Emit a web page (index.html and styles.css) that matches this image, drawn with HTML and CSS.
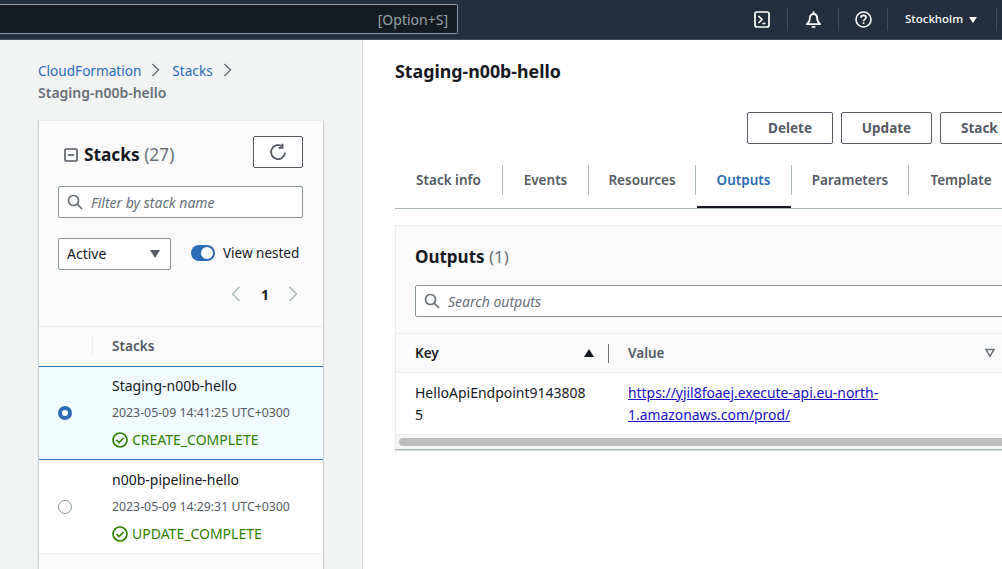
FILE: index.html
```html
<!DOCTYPE html>
<html lang="en">
<head>
<meta charset="utf-8">
<title>Staging-n00b-hello</title>
<link rel="stylesheet" href="styles.css">
</head>
<body>
<header class="topbar">
  <div class="topsearch"><span class="shortcut">[Option+S]</span></div>
  <div class="topicons">
    <div class="topicon ti-shell">
      <svg width="16" height="17" viewBox="0 0 16 17" fill="none" stroke="#fff" stroke-width="1.7"><rect x="1" y="1" width="14" height="15" rx="2"/><path d="M4.5 5l3.5 3.5-3.5 3.500M8.500 12.500h3"/></svg>
    </div>
    <div class="topicon ti-bell">
      <svg width="17" height="18" viewBox="0 0 17 18" fill="none" stroke="#fff" stroke-width="1.8" stroke-linejoin="round"><path d="M8.500 3C5.900 3 4.800 5 4.800 7.500c0 2.500-1 4.200-3 5.700h13.400c-2-1.500-3-3.200-3-5.700C12.200 5 11.100 3 8.500 3z"/><path d="M8.500 .5V3M6.700 15.800h3.600"/></svg>
    </div>
    <div class="topicon ti-help">
      <svg width="17" height="17" viewBox="0 0 17 17" fill="none" stroke="#fff" stroke-width="1.6"><circle cx="8.500" cy="8.500" r="7.500"/><path d="M6 6.700c0-1.400 1.100-2.300 2.500-2.300s2.500.9 2.500 2.100c0 1.800-2.500 1.900-2.500 3.800"/><path d="M8.500 11.300v1.700"/></svg>
    </div>
    <div class="region"><span class="region-name">Stockholm</span><i class="caret-white"></i></div>
  </div>
</header>

<div class="page">
  <aside class="left">
    <nav class="crumbs">
      <div class="crumbline">
        <a class="crumb">CloudFormation</a>
        <svg class="chev" width="10" height="14" viewBox="0 0 10 14" fill="none" stroke="#687078" stroke-width="1.500"><path d="M1.500 1l6 6-6 6"/></svg>
        <a class="crumb">Stacks</a>
        <svg class="chev" width="10" height="14" viewBox="0 0 10 14" fill="none" stroke="#687078" stroke-width="1.500"><path d="M1.500 1l6 6-6 6"/></svg>
      </div>
      <div class="crumb-current">Staging-n00b-hello</div>
    </nav>

    <section class="stacks">
      <div class="stacks-head">
        <div class="stacks-title">
          <svg width="14" height="14" viewBox="0 0 14 14" fill="none" stroke="#545b64" stroke-width="1.600"><rect x="1" y="1" width="12" height="12" rx="1"/><path d="M4 7h6"/></svg>
          <h2>Stacks <span class="count">(27)</span></h2>
        </div>
        <button class="refresh" type="button">
          <svg width="18" height="18" viewBox="0 0 18 18" fill="none" stroke="#545b64" stroke-width="1.800"><path d="M16 9.500A7 7 0 1 1 12.800 3.200"/><path d="M13.500 .8v4h-4"/></svg>
        </button>
      </div>
      <div class="field filter">
        <svg width="16" height="16" viewBox="0 0 16 16" fill="none" stroke="#687078" stroke-width="1.700"><circle cx="6.500" cy="6.500" r="5"/><path d="M10.200 10.200l4.800 4.800"/></svg>
        <span class="placeholder">Filter by stack name</span>
      </div>
      <div class="controls">
        <div class="select"><span>Active</span><i class="caret-grey"></i></div>
        <div class="toggle"><i class="switch"><b></b></i><span>View nested</span></div>
      </div>
      <div class="pager">
        <svg width="10" height="16" viewBox="0 0 10 16" fill="none" stroke="#aab7b8" stroke-width="1.500"><path d="M8.500 1l-7 7 7 7"/></svg>
        <span>1</span>
        <svg width="10" height="16" viewBox="0 0 10 16" fill="none" stroke="#aab7b8" stroke-width="1.500"><path d="M1.500 1l7 7-7 7"/></svg>
      </div>
      <div class="list-head"><span class="head-sep"></span><span>Stacks</span></div>

      <div class="row selected">
        <i class="radio on"></i>
        <div class="row-body">
          <div class="name">Staging-n00b-hello</div>
          <div class="date">2023-05-09 14:41:25 UTC+0300</div>
          <div class="status">
            <svg width="16" height="16" viewBox="0 0 16 16" fill="none" stroke="#2f8000" stroke-width="1.700"><circle cx="8" cy="8" r="7"/><path d="M4.500 8l2.500 2.500 4.500-4.500"/></svg>
            <span>CREATE_COMPLETE</span>
          </div>
        </div>
      </div>
      <div class="row plain">
        <i class="radio"></i>
        <div class="row-body">
          <div class="name">n00b-pipeline-hello</div>
          <div class="date">2023-05-09 14:29:31 UTC+0300</div>
          <div class="status">
            <svg width="16" height="16" viewBox="0 0 16 16" fill="none" stroke="#2f8000" stroke-width="1.700"><circle cx="8" cy="8" r="7"/><path d="M4.500 8l2.500 2.500 4.500-4.500"/></svg>
            <span>UPDATE_COMPLETE</span>
          </div>
        </div>
      </div>
    </section>
  </aside>

  <main class="right">
    <h1>Staging-n00b-hello</h1>
    <div class="actions">
      <button class="btn b-delete" type="button">Delete</button>
      <button class="btn b-update" type="button">Update</button>
      <button class="btn b-stack" type="button">Stack</button>
    </div>
    <div class="tabs">
      <a class="tab t1">Stack info</a>
      <a class="tab t2">Events</a>
      <a class="tab t3">Resources</a>
      <a class="tab t4 active">Outputs</a>
      <a class="tab t5">Parameters</a>
      <a class="tab t6">Template</a>
    </div>
    <section class="outputs">
      <h2 class="outputs-title">Outputs <span class="count">(1)</span></h2>
      <div class="field search">
        <svg width="16" height="16" viewBox="0 0 16 16" fill="none" stroke="#687078" stroke-width="1.700"><circle cx="6.500" cy="6.500" r="5"/><path d="M10.200 10.200l4.800 4.800"/></svg>
        <span class="placeholder">Search outputs</span>
      </div>
      <div class="thead">
        <div class="th th-key"><span>Key</span><i class="sort-up"></i></div>
        <div class="th th-value">
          <span>Value</span>
          <svg width="12" height="10" viewBox="0 0 12 10" fill="none" stroke="#687078" stroke-width="1.500"><path d="M2 1.500h8L6 8.300z"/></svg>
        </div>
      </div>
      <div class="tbody">
        <div class="td-key">HelloApiEndpoint9143808<br>5</div>
        <div class="td-value"><a class="url">https://yjil8foaej.execute-api.eu-north-<br>1.amazonaws.com/prod/</a></div>
      </div>
      <div class="scrolltrack"><div class="scrollbar"></div></div>
    </section>
  </main>
</div>
</body>
</html>
```
FILE: styles.css
```css
* { box-sizing: border-box; }
html, body { margin: 0; height: 100%; overflow: hidden; }
body {
  width: 1002px;
  height: 569px;
  background: #fff;
  color: #16191f;
  font-family: "Noto Sans", "Open Sans", sans-serif;
  font-size: 14px;
}
h1, h2 { margin: 0; }

.topbar {
  height: 40px;
  display: flex;
  background: #232f3e;
  border-bottom: 1px solid #414d5c;
  overflow: hidden;
}
.topsearch {
  width: 458px;
  height: 30px;
  margin-top: 4px;
  display: flex;
  justify-content: flex-end;
  align-items: center;
  padding-right: 9px;
  background: #161b22;
  border: 1px solid #8d99a8;
  border-left: 0;
  border-radius: 0 2px 2px 0;
}
.shortcut { color: #95a5a6; font-size: 14px; }
.topicons { display: flex; align-items: center; height: 39px; padding-left: 296px; flex: 1; }
.topicon {
  height: 23px;
  display: flex;
  align-items: center;
  border-right: 1px solid #414d5c;
}
.ti-shell { width: 34px; }
.ti-bell { width: 51px; padding-left: 17px; }
.ti-help { width: 49px; padding-left: 16px; }
.region {
  display: flex;
  align-items: center;
  gap: 6px;
  width: 109px;
  height: 23px;
  padding-left: 17px;
  border-right: 1px solid #414d5c;
  color: #fff;
  font-size: 11.5px;
  font-weight: 500;
}
.region-name { margin-top: -2px; }
.caret-white {
  width: 0; height: 0;
  border-left: 4.5px solid transparent;
  border-right: 4.5px solid transparent;
  border-top: 6px solid #fff;
}

.page { display: flex; height: 529px; }
.left {
  width: 363px;
  flex: none;
  background: #f2f3f3;
  border-right: 1px solid #d5dbdb;
  padding: 20px 38px 0;
  overflow: hidden;
}
.crumbs { height: 60px; }
.crumbline { display: flex; align-items: center; height: 20px; }
.crumb { color: #2b6cb5; font-size: 13.6px; }
.chev { margin: 0 11px 0 10px; }
.crumb-current { margin-top: 2px; color: #687078; font-size: 14px; font-weight: 600; line-height: 22px; }

.stacks {
  width: 286px;
  height: 470px;
  background: #fafafa;
  border: 1px solid #cfd5d5;
  border-top-color: #eaeded;
  border-bottom: 0;
  box-shadow: 0 1px 1px rgba(0,28,36,.2);
  overflow: hidden;
}
.stacks-head {
  display: flex;
  justify-content: space-between;
  align-items: flex-start;
  padding: 15px 20px 0 25px;
  height: 65px;
}
.stacks-title { display: flex; align-items: center; gap: 6px; height: 38px; }
.stacks-title h2 { font-size: 17.3px; font-weight: 700; line-height: 38px; }
.count { color: #687078; font-weight: 400; }
.refresh {
  width: 50px;
  height: 32px;
  padding: 0;
  display: flex;
  align-items: center;
  justify-content: center;
  background: #fff;
  border: 1px solid #545b64;
  border-radius: 2px;
}
.field {
  display: flex;
  align-items: center;
  background: #fff;
  border: 1px solid #879596;
  border-radius: 2px;
  height: 32px;
}
.placeholder { color: #687078; font-style: italic; font-size: 14px; }
.filter { width: 245px; margin-left: 19px; padding-left: 8px; gap: 8px; }
.controls { display: flex; align-items: center; margin: 20px 0 0 19px; }
.select {
  width: 113px;
  height: 32px;
  display: flex;
  align-items: center;
  justify-content: space-between;
  padding: 0 10px 2px 8px;
  background: #fff;
  border: 1px solid #879596;
  border-radius: 2px;
  font-size: 14px;
}
.caret-grey {
  width: 0; height: 0;
  margin-top: 2px;
  border-left: 5.5px solid transparent;
  border-right: 5.5px solid transparent;
  border-top: 8px solid #545b64;
}
.toggle { display: flex; align-items: center; gap: 8px; margin: -3px 0 0 20px; font-size: 13.5px; }
.switch {
  display: block;
  width: 24px;
  height: 16px;
  padding: 2px;
  background: #2b6cb5;
  border-radius: 8px;
}
.switch b {
  display: block;
  width: 12px;
  height: 12px;
  margin-left: 8px;
  background: #fff;
  border-radius: 50%;
}
.pager {
  display: flex;
  align-items: center;
  justify-content: flex-end;
  gap: 20px;
  height: 24px;
  margin-top: 12px;
  padding-right: 25px;
  font-size: 14px;
  font-weight: 700;
}
.pager span { margin-right: -1px; }
.list-head {
  display: flex;
  align-items: center;
  margin-top: 20px;
  height: 40px;
  padding-bottom: 3px;
  border-top: 1px solid #eaeded;
  color: #545b64;
  font-size: 13.6px;
  font-weight: 600;
}
.head-sep { width: 1px; height: 20px; margin: 0 19px 0 53px; background: #eaeded; }
.row {
  display: flex;
  height: 94px;
  padding-left: 19px;
  background: #fff;
  border-bottom: 1px solid #eaeded;
}
.selected {
  background: #f1faff;
  border: 1px solid #2b6cb5;
  border-right: 0;
  margin-left: -1px;
  padding-left: 19px;
}
.radio {
  flex: none;
  align-self: center;
  width: 14px;
  height: 14px;
  background: #fff;
  border: 1px solid #879596;
  border-radius: 50%;
}
.radio.on { border: 4px solid #2b6cb5; }
.row-body { margin-left: 40px; padding-top: 8px; }
.plain .row-body { padding-top: 9px; }
.name { font-size: 14px; line-height: 22px; }
.date { color: #545b64; font-size: 12.3px; line-height: 20px; margin-top: 6px; }
.status { display: flex; align-items: center; gap: 4px; color: #2f8000; font-size: 14px; line-height: 20px; margin-top: 7px; }

.right { flex: 1; min-width: 0; padding: 20px 0 0 32px; overflow: hidden; }
h1 { font-size: 17.8px; font-weight: 700; line-height: 22px; }
.actions { display: flex; gap: 8px; margin-top: 30px; padding-left: 352px; }
.btn {
  flex: none;
  height: 32px;
  padding: 0;
  background: #fff;
  border: 1px solid #545b64;
  border-radius: 2px;
  color: #545b64;
  font-family: inherit;
  font-size: 13.5px;
  font-weight: 700;
}
.b-delete { width: 86px; }
.b-update { width: 91px; }
.b-stack { width: 130px; padding-left: 20px; text-align: left; }
.tabs {
  display: flex;
  width: 700px;
  height: 53px;
  margin-top: 12px;
  padding-top: 9px;
  border-bottom: 1px solid #aab7b8;
  font-size: 13.5px;
  font-weight: 600;
  color: #545b64;
}
.tab {
  flex: none;
  height: 30px;
  display: flex;
  align-items: center;
  justify-content: center;
  border-right: 1px solid #aab7b8;
}
.t1 { width: 108px; }
.t2 { width: 86px; }
.t3 { width: 107px; }
.t4 { width: 96px; color: #2b6cb5; position: relative; }
.t4::after {
  content: "";
  position: absolute;
  left: 1px; right: 0; bottom: -13px;
  height: 2px;
  background: #16191f;
}
.t5 { width: 117px; }
.t6 { width: 104px; border-right: 0; }

.outputs {
  width: 700px;
  height: 225px;
  margin-top: 16px;
  border: 1px solid #eaeded;
  border-bottom: 1px solid #aab7b8;
  background: #fafafa;
  box-shadow: 0 1px 1px rgba(0,28,36,.15);
}
.outputs-title { font-size: 17px; font-weight: 700; line-height: 24px; padding: 19px 0 0 19px; height: 59px; }
.search { width: 660px; margin-left: 19px; padding-left: 8px; gap: 8px; }
.thead {
  display: flex;
  height: 40px;
  margin-top: 16px;
  border-top: 1px solid #eaeded;
  border-bottom: 1px solid #eaeded;
  font-size: 13.5px;
  font-weight: 600;
}
.th { display: flex; align-items: center; justify-content: space-between; }
.th-key { width: 213px; padding: 0 15px 0 19px; position: relative; }
.th-key::after {
  content: "";
  position: absolute;
  right: 0; top: 10px;
  width: 1px; height: 19px;
  background: #687078;
}
.th-value { width: 387px; padding-left: 19px; color: #545b64; }
.sort-up {
  width: 0; height: 0;
  border-left: 5px solid transparent;
  border-right: 5px solid transparent;
  border-bottom: 8px solid #16191f;
}
.tbody { display: flex; height: 62px; background: #fff; border-bottom: 1px solid #eaeded; font-size: 14px; line-height: 22px; padding-top: 9px; }
.td-key { width: 213px; padding-left: 19px; }
.td-value { padding-left: 19px; font-size: 13.9px; }
.url { color: #1a0dcc; text-decoration: underline; }
.scrolltrack { height: 14px; background: #f5f5f5; padding: 3px; }
.scrollbar { height: 8px; background: #bdbdbd; border-radius: 4px; }
```
